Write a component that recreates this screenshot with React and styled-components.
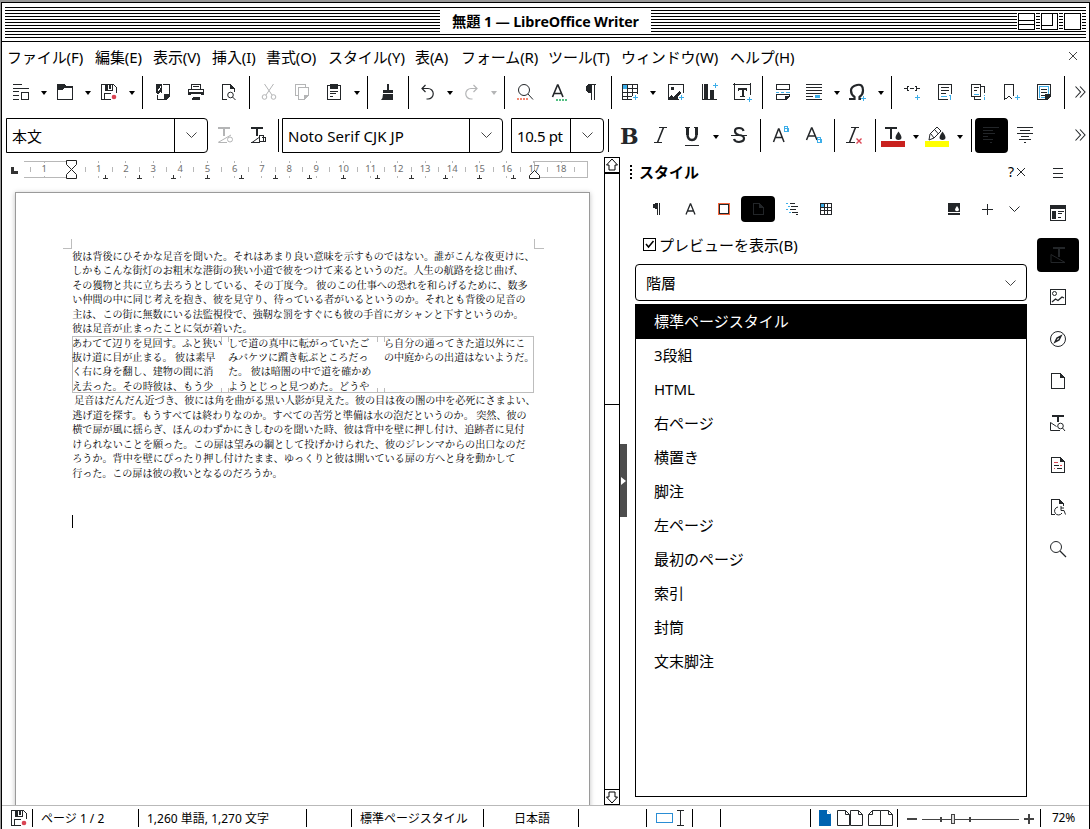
import React from 'react';
import styled, { createGlobalStyle, css } from 'styled-components';

const INK = '#232629';
const BLUE = '#3daee9';
const RED = '#da4453';
const MUTED = '#b4b5b6';

const GlobalStyle = createGlobalStyle`
  * { box-sizing: border-box; }
  body {
    margin: 0;
    background: #999;
    color: #000;
    font-family: "Noto Sans", "Noto Sans CJK JP", sans-serif;
    font-size: 15px;
    overflow: hidden;
  }
`;

const Window = styled.div`
  display: flex;
  flex-direction: column;
  width: 1089px;
  height: 827px;
  margin: 2px 0 0 1px;
  border: 1px solid #000;
  border-bottom: 0;
  background: #fff;
  overflow: hidden;
`;

/* Title bar */
const TitleBar = styled.header`
  flex: none;
  height: 39px;
  padding: 4px 3px 3px;
  border-bottom: 1px solid #000;
`;
const Stripes = styled.div`
  display: grid;
  grid-template-columns: 1fr 211px 1fr;
  height: 31px;
  background: repeating-linear-gradient(#000 0 1px, #fff 1px 3px);
`;
const Title = styled.h1`
  grid-column: 2;
  height: 26px;
  margin: 1px 0 0;
  background: #fff;
  font-family: "Open Sans", "Noto Sans CJK JP", sans-serif;
  font-size: 14.3px;
  font-weight: 700;
  line-height: 27px;
  text-align: center;
  white-space: nowrap;
  letter-spacing: -0.16px;
`;
const WindowButtons = styled.div`
  display: flex;
  justify-content: flex-end;
  gap: 4px;
  padding: 5px 4px 0 0;
`;
const WindowButton = styled.button`
  position: relative;
  width: 19px;
  height: 19px;
  padding: 0;
  border: 1px solid #fff;
  background: #fff;
  box-shadow: inset 0 0 0 1px #000;
  ${p => p.$kind === 'shade' && css`
    &::after { content: ''; position: absolute; left: 0; right: 0; top: 7px; height: 3px; border: solid #000; border-width: 1px 0; }
  `}
  ${p => p.$kind === 'zoom' && css`
    &::after { content: ''; position: absolute; left: 0; top: 0; width: 10px; height: 11px; border: 1px solid #000; }
  `}
`;

/* Menus */
const MenuBar = styled.nav`
  display: flex;
  flex: none;
  align-items: center;
  height: 32px;
  padding: 0 7px 4px 5px;
`;
const MenuItem = styled.span`
  flex: none;
  width: ${p => p.$w}px;
  white-space: nowrap;
  letter-spacing: -0.1px;
`;
const MenuEnd = styled.div`
  display: flex;
  flex: 1;
  justify-content: flex-end;
  padding-right: 1px;
`;

/* Toolbars */
const Toolbar = styled.div`
  display: flex;
  flex: none;
  align-items: center;
  height: 36px;
  padding-left: 3px;
`;
const FormatBar = styled(Toolbar)`
  height: 47px;
  padding: 8px 0 4px 4px;
  svg { margin-bottom: 1px; }
`;
const Slot = styled.span`
  display: flex;
  flex: none;
  align-items: center;
  align-self: stretch;
  width: ${p => p.$w}px;
  padding-left: ${p => Math.floor((p.$w - 16) / 2)}px;
  border-radius: 4px;
  background: ${p => (p.$on ? '#000' : 'none')};
`;
const Divider = styled.i`
  flex: none;
  width: 1px;
  height: 33px;
  margin: ${p => p.$top ?? 0}px ${p => p.$w - 1 - Math.floor(p.$w / 2)}px 0 ${p => Math.floor(p.$w / 2)}px;
  background: #000;
`;
const Arrow = styled.span`
  flex: none;
  display: flex;
  justify-content: center;
  width: ${p => p.$w}px;
  padding: 2px 0 0 1px;
  &::after {
    content: '';
    border: solid transparent;
    border-width: 4px 3.5px 0;
    border-top-color: ${p => (p.$off ? MUTED : '#000')};
  }
`;
const Combo = styled.div`
  display: flex;
  flex: none;
  width: ${p => p.$w}px;
  height: 35px;
  margin-right: ${p => p.$mr}px;
  border: 1px solid #000;
  border-radius: 0 4px 4px 0;
`;
const ComboValue = styled.span`
  flex: 1;
  padding-left: 5px;
  line-height: 35px;
  white-space: nowrap;
  letter-spacing: ${p => p.$ls ?? 0}px;
`;
const ComboButton = styled.span`
  display: flex;
  align-items: center;
  justify-content: center;
  width: 33px;
  border-left: 1px solid #000;
`;

/* Main area */
const Main = styled.main`
  display: flex;
  flex: none;
  height: 648px;
`;
const DocArea = styled.section`
  width: 602px;
  overflow: hidden;
`;
const RulerSvg = styled.svg`
  display: block;
  width: 602px;
  height: 35px;
  font-size: 9.5px;
  fill: #707070;
`;
const Page = styled.article`
  position: relative;
  width: 575px;
  height: 700px;
  margin-left: 13px;
  padding: 55.8px 0 0 56.3px;
  border: 1px solid #9a9a9a;
  box-shadow: 0 1px 5px rgba(0, 0, 0, 0.25);
  font-family: "Noto Serif CJK JP", "Noto Sans CJK JP", serif;
  font-size: 10.1px;
  line-height: 14.46px;
  color: #000;
`;
const Line = styled.div`
  width: ${p => p.$w}px;
  height: 14.46px;
  margin-left: ${p => p.$indent ?? 0}px;
  white-space: nowrap;
  letter-spacing: -0.35px;
  text-align: justify;
  text-align-last: justify;
`;
const Columns = styled.div`
  position: relative;
  display: grid;
  grid-template-columns: 156px 156px 150px;
  width: 462px;
  height: 57.84px;
  margin-left: -0.3px;
  box-shadow: inset 0 0 0 1px #bdbdbd;
`;
const Overlay = styled.svg`
  position: absolute;
  left: 0;
  top: 0;
  width: ${p => p.$w}px;
  height: ${p => p.$h}px;
  stroke: #bdbdbd;
  fill: none;
`;
const Caret = styled.div`
  width: 1px;
  height: 13px;
  margin: 35px 0 0 -0.3px;
  background: #000;
`;

/* Scroll bar */
const ScrollBar = styled.div`
  display: flex;
  flex-direction: column;
  width: 16px;
  border: 1px solid #000;
`;
const ScrollEnd = styled.div`
  display: flex;
  justify-content: center;
  flex: none;
  height: 14px;
`;
const Thumb = styled.div`
  height: 233px;
  border: solid #000;
  border-width: 2px 0 1px;
`;
const Trough = styled.div`
  flex: 1;
  border-bottom: 1px solid #000;
`;
const Splitter = styled.div`
  display: flex;
  align-items: center;
  width: 7px;
  height: 73px;
  margin-top: 287px;
  background: #4d4d4d;
  &::after {
    content: '';
    margin-left: 1px;
    border: solid transparent;
    border-width: 4px 0 4px 5px;
    border-left-color: #fff;
  }
`;

/* Sidebar */
const Deck = styled.aside`
  display: flex;
  flex-direction: column;
  width: 400px;
`;
const DeckTitle = styled.div`
  display: flex;
  align-items: center;
  height: 31px;
  padding: 0 0 2px 3px;
`;
const Grip = styled.i`
  width: 2px;
  height: 14px;
  margin-right: 7px;
  background: repeating-linear-gradient(#000 0 2px, transparent 2px 4px);
`;
const DeckName = styled.b`
  flex: 1;
`;
const HelpMark = styled.span`
  margin-right: -1px;
  font-size: 14px;
`;
const DeckHead = styled.div`
  width: 402px;
`;
const DeckTools = styled.div`
  display: flex;
  height: 26px;
  margin: 8px 0 0 14px;
`;
const CheckRow = styled.label`
  display: flex;
  align-items: center;
  height: 22px;
  margin: 11px 0 1px 16px;
`;
const CheckBox = styled.span`
  display: flex;
  width: 13px;
  height: 13px;
  margin: 1px 3px 0 0;
  border: 1px solid #000;
`;
const Select = styled.div`
  display: flex;
  align-items: center;
  justify-content: space-between;
  width: 392px;
  height: 37px;
  margin: 8px 0 0 8px;
  padding: 0 8px 0 10px;
  border: 1px solid #000;
  border-radius: 4px;
`;
const StyleList = styled.ul`
  width: 392px;
  height: 493px;
  margin: 3px 0 0 8px;
  padding: 0;
  border: 1px solid #000;
  border-top: 0;
  list-style: none;
`;
const StyleItem = styled.li`
  height: ${p => (p.$on ? 35 : 34)}px;
  margin: 0 -1px;
  padding-left: 19px;
  line-height: ${p => (p.$on ? 34 : 32)}px;
  background: ${p => (p.$on ? '#000' : 'none')};
  color: ${p => (p.$on ? '#fff' : '#000')};
`;
const TabBar = styled.div`
  display: flex;
  flex-direction: column;
  gap: 8px;
  padding: 0 0 0 10px;
`;
const Tab = styled.span`
  display: flex;
  align-items: center;
  justify-content: center;
  width: 42px;
  height: 34px;
  border-radius: 4px;
  background: ${p => (p.$on ? '#000' : 'none')};
`;
const MenuTab = styled(Tab)`
  height: 31px;
`;

/* Status bar */
const StatusBar = styled.footer`
  display: flex;
  align-items: center;
  flex: none;
  height: 24px;
  border-top: 1px solid #b9b9b9;
  font-size: 12px;
`;
const StatusCell = styled.span`
  display: flex;
  align-items: center;
  flex: none;
  gap: ${p => p.$gap ?? 0}px;
  width: ${p => p.$w}px;
  height: 18px;
  padding-left: ${p => p.$pl ?? 8}px;
  padding-bottom: 1px;
  margin-top: 1px;
  border-right: ${p => (p.$last ? 0 : 1)}px solid #000;
  white-space: nowrap;
  letter-spacing: ${p => p.$ls ?? 0}px;
`;

const IconSvg = styled.svg`
  display: block;
  flex: none;
  overflow: visible;
  stroke: ${p => p.$c};
  fill: none;
`;

const Plus = ({ x, y }) => <path stroke={BLUE} d={`M${x} ${y}h5M${x + 2.5} ${y - 2.5}v5`} />;
const Fill = p => <path fill={INK} stroke="none" {...p} />;
const Lines = ({ d, c = INK }) => <path d={d} stroke={c} />;

const ICONS = {
  template: <path d="M0 .5h9M0 4.5h16M0 7.5h6M0 11.5h6M0 15.5h6M8.5 8.5h7v7h-7z" />,
  open: <><Fill d="M0 0h7l2 2h7v2H7L5 6H0z" /><path d="M.5 1v14.5h15V3" /></>,
  save: <><path d="M.5 15.5V.5h12l3 3V9M3.5 15.5V9.5h6.5M.5 15.5h9" /><path d="M4.5 1v5.5h7V1" /><Fill d="M5 1h2v5H5zM8 1h2v4H8z" /><circle shapeRendering="auto" cx="13" cy="13" r="2.3" fill={RED} stroke="none" /></>,
  pdf: <><path d="M8 .5h6.500v10M2.500 11v4.500h6" /><Fill d="M1 0h6v9l-2-1-2 2-2-1zM15 10v2l-4 4H9v-6z" /><path stroke="#fff" d="M3 6.500q2-1.500 2.500-4" /></>,
  print: <><path d="M3.500 5V.5h9V5M5 2.500h6M1 10.500H.5v-5h15v5H14" /><Fill d="M3 10h10v1h2V8H1v3h2zM5 13h7v3H4v-2z" /></>,
  preview: <><path d="M6 15.500H1.500V.5h8l4 4V8" /><Fill d="M9 0l5 5H9z" /><circle shapeRendering="auto" cx="9.500" cy="11" r="2.800" /><path shapeRendering="auto" d="M11.500 13l3 3" /></>,
  cut: <g shapeRendering="auto"><path d="M3.500 0l7.500 11M12.500 0L5 11" /><circle cx="3.500" cy="13" r="2.300" /><circle cx="12.500" cy="13" r="2.300" /></g>,
  copy: <><path d="M4 11.500H1.500V.5h10V3" /><path d="M4.500 3.500h10v8l-4 4h-6z" /><Fill style={{ fill: MUTED }} d="M15 11l-5 5v-5z" /></>,
  paste: <><path d="M4 1.500H1.500v14h13v-14H12M4 7.500h8M4 9.500h6M4 12.500h3" /><Fill d="M4 0h8v5H4z" /></>,
  brush: <Fill shapeRendering="auto" d="M7 0h2v6h4v3H3V6h4zM3 10h10v6H1q2-2 2-6z" />,
  undo: <g shapeRendering="auto"><path strokeWidth="1.200" d="M5.500 1L2 4.500 5.500 8M2.500 4.500h5.500a5 5 0 0 1 0 10.500H6.500" /></g>,
  redo: <g shapeRendering="auto"><path strokeWidth="1.200" d="M10.500 1L14 4.500 10.500 8M13.500 4.500H8A5 5 0 0 0 8 15h1.500" /></g>,
  find: <><g shapeRendering="auto"><circle cx="7" cy="6" r="5.500" /><path d="M11 10l5 5.500" /></g><path stroke="#f48771" strokeWidth="2" strokeDasharray="2 1" d="M0 15h11" /></>,
  spell: <><path shapeRendering="auto" strokeWidth="1.600" d="M1.500 13L6.500 1h.5l5 12M3.500 9.500h6.500" /><path stroke="#54c083" strokeWidth="2" strokeDasharray="2 1" d="M5 16h11" /></>,
  para: <><Fill d="M9 0v9H7Q3 8.500 3 4.500T7 0z" /><path d="M8.500 0v16M11.500 0v16M7 .5h6" /></>,
  table: <><path d="M10 15.500H.5V.5h15V10M1 4.500h15M1 8.500h15M1 12.500h9M5.500 1v15M10.500 1v11" /><path fill={BLUE} stroke="none" d="M1 1h4v4H1z" /><Plus x={11} y={13.500} /></>,
  image: <><path d="M.5 16V.5h15V9" /><Fill d="M0 16l3-5 3 2 5-6 2 2-3 4 1 3z" /><circle cx="4.500" cy="4.500" r="1.800" fill={INK} stroke="none" /><Plus x={11} y={13.500} /></>,
  chart: <><path d="M1.500 0v15.500H16" /><Fill d="M3 0h4v15H3zM9 6h4v9H9z" /><Plus x={12} y={1.500} /></>,
  textbox: <><path d="M.5-1v16.500H11M-1 .5h18M16.500-1v12" /><path strokeWidth="2" d="M4 5h9M8.500 5v8" /><path d="M4.500 4v3M12.500 4v3M6 12.500h5" /><Plus x={13} y={15} /></>,
  pagebreak: <><path d="M1.500.500h13v5h-13zM10 15.500H1.500v-5h13v2" /><Fill d="M15 12l-4 4h-1v-4z" /><Lines c={BLUE} d="M1 8h3M6 8h3M11 8h4" /></>,
  field: <><path d="M0 .5h16M0 3.500h16M0 6.500h16M0 9.500h16M0 12.500h7M0 15.500h16" /><path fill={BLUE} stroke="none" d="M9 11h5v3H9z" /></>,
  omega: <><path shapeRendering="auto" strokeWidth="2.200" d="M0 15h5.500v-2Q2 10.500 2 6.500T8 1t6 5.500q0 4-3.500 6.500v2H12" /><Plus x={12} y={14.500} /></>,
  link: <><path d="M0 4.500h3M5 2.500H3.500v4H5M6 4.500h4M11 2.500h1.500v4H11M13 4.500h3" /><Plus x={11} y={13.500} /></>,
  footnote: <><path d="M11 15.500H1.500V.5h13V10M4 3.500h8M4 6.500h8M4 9.500h5" /><Lines c={BLUE} d="M4 12.500h6M12 11.500h1.500v4" /></>,
  endnote: <><path d="M1.500.500h9v12h-9zM11 2.500h3.500V9M4.500 13v2.500H11M4 3.500h5M4 6.500h3" /><Lines c={BLUE} d="M4 10.500h5M14.500 11v1M14.500 13v3" /></>,
  bookmark: <><path d="M10.500 12V.5h-9v15l4.500-3 3 2" /><Plus x={12} y={13.500} /></>,
  crossref: <><path d="M10 15.500H1.500V.5h13V12" /><Lines c={BLUE} d="M4 13.500h-1V2.500h9V10M5 13.500h4" /><path d="M5 5.500h6M5 8.500h6M5 11.500h4" /><Fill d="M15 10v2l-4 4H9v-6z" /></>,
  more: <g shapeRendering="auto"><path strokeWidth="1.100" d="M3.500 2.500L8.500 8l-5 5.500M8 2.500L13 8l-5 5.500" /></g>,
  updateStyle: <><path strokeWidth="2" d="M1 1h12M7 1v8" /><path shapeRendering="auto" d="M2 15.500h8M1 15.500L14 8" /><circle shapeRendering="auto" cx="13" cy="12.500" r="2.500" /></>,
  newStyle: <><path strokeWidth="2" d="M1 1h12M7 1v8" /><path shapeRendering="auto" d="M1 15.500h9M2 15.500l7-5" /><path d="M9.500 8.500h4v6h-4zM12 10.500h3.500v4H14" /></>,
  italic: <><path d="M6 .5h8M1 15.500h8" /><path shapeRendering="auto" strokeWidth="1.600" d="M10.500.5l-6 15" /></>,
  underline: <><path strokeWidth="3" d="M3.500 0v8M12.500 0v8" /><path shapeRendering="auto" strokeWidth="2.400" d="M3.500 7q0 6 4.500 6t4.500-6" /><path d="M1 0.500h5M10 0.500h4M1 18.500h14" /></>,
  strike: <><path shapeRendering="auto" strokeWidth="2.200" d="M12.500 4Q12 1 8 1 4 1 4 4t4 4q5 .5 5 3.500T8 15Q4 15 3 12" /><path d="M0 8.500h16" /></>,
  sup: <><path shapeRendering="auto" strokeWidth="1.500" d="M.5 15L5.500 2h.5l5 13M2.500 10.500h7" /><Lines c={BLUE} d="M11.500-.5h3v5h-3zM11.500 1.500h3.500v3" /></>,
  sub: <><path shapeRendering="auto" strokeWidth="1.500" d="M.5 13L5.500 1h.5l5 12M2.500 9h7" /><Lines c={BLUE} d="M11.500 10.500h3v5h-3zM11.500 12.500h3.500v3" /></>,
  clear: <><path d="M5 .5h8M0 15.500h9" /><path shapeRendering="auto" strokeWidth="1.600" d="M9.500.5l-6 15" /><path shapeRendering="auto" stroke={RED} strokeWidth="1.400" d="M10.500 11.500l5 5M15.500 11.500l-5 5" /></>,
  fontColor: <><path strokeWidth="2" d="M0 1h12M6 1v11" /><Fill shapeRendering="auto" d="M13.500 4.500q-6 8 0 8.500 6-.5 0-8.500" /><path fill="#c9211e" stroke="none" d="M-4 14h24v6H-4z" /></>,
  highlight: <><path shapeRendering="auto" d="M0 13l1-6 7-7 4 4-7 7-5 2M2 7l3 4M6 3l3.500 4" /><Fill shapeRendering="auto" d="M13.500 4.500q-6 8 0 8.500 6-.5 0-8.500" /><path fill="#ff0" stroke="none" d="M-4 14h24v6H-4z" /></>,
  alignLeft: <path d="M0 .5h16M0 3.500h10M0 6.500h12M0 9.500h5M0 12.500h10M7 15.500h2" />,
  alignCenter: <path d="M0 .5h16M3 3.500h10M0 6.500h16M4 9.500h8M2 12.500h12M7 15.500h2" />,
  chevron: <path shapeRendering="auto" d="M3.500 5.500l5 5 5-5" />,
  frame: <><path stroke="#f4673e" d="M2.500 2.500h11v11h-11z" /><path d="M3.500 3.500h9v9h-9z" /></>,
  page: <><path d="M3.500 2.500h6l4 4v7h-10z" /><Fill d="M9 2l5 5H9z" /></>,
  list: <><path d="M6 2.500h5M7 5.500h7M6 8.500h6M8 11.500h6M12 13.500h2" /><Lines c={BLUE} d="M2 2.500h2M4 5.500h2M2 8.500h2M5 11.500h2" /></>,
  smallTable: <><path d="M2.500 2.500h11v11h-11zM2 6.500h12M2 9.500h12M6.500 2v12M9.500 2v12" /><path fill={BLUE} stroke="none" d="M3 3h3v3H3z" /></>,
  smallPara: <><Fill d="M9 2v6H7Q4 7.500 4 5t3-3z" /><path d="M8.500 2v12M10.500 2v12" /></>,
  smallA: <path shapeRendering="auto" strokeWidth="1.300" d="M3 13.500L7.300 3h.4L12 13.500M4.500 10h6" />,
  fillMode: <><Fill d="M2 2h12v9H2zM2 12h12v2H2z" /><path shapeRendering="auto" fill="#fff" stroke="none" d="M11 5q-4 5 0 5.300 4-.3 0-5.300" /></>,
  add: <path d="M3 8.500h11M8.500 3v11" />,
  menu: <path d="M3 3.500h10M3 8.500h10M3 12.500h10" />,
  props: <><path d="M.5.500h15v15H.5zM8 6.500h6M8 8.500h4M8 12.500h3" /><Fill d="M0 0h16v4H0zM2 6h4v8H2z" /></>,
  tabStyles: <><path strokeWidth="2" d="M3 1h12M9 1v9" /><path shapeRendering="auto" d="M1 7.500v8h14z" /></>,
  gallery: <><path d="M.5.500h15v15H.5z" /><circle shapeRendering="auto" cx="4.500" cy="4.500" r="2" /><path shapeRendering="auto" strokeWidth="1.300" d="M2 13l3.500-3 2.500 1.500L12 8l2 1" /></>,
  compass: <g shapeRendering="auto"><circle cx="8" cy="8" r="7.500" /><path strokeWidth="1.500" d="M11 5L9 9l-4 2 2-4z" /></g>,
  tabPage: <><path d="M1.500.500h9l4 4v11h-13z" /><Fill d="M10 0l5 5h-5z" /></>,
  inspector: <><path strokeWidth="2" d="M2 1h12M8 1v6" /><path shapeRendering="auto" d="M10 15.500H.5v-8l6 4" /><circle shapeRendering="auto" cx="10.500" cy="11" r="2.800" /><path shapeRendering="auto" d="M12.500 13l2.500 3" /></>,
  changes: <><path d="M1.500.500h9l4 4v11h-13zM4 8.500h5M7 11.500h5" /><Fill d="M10 0l5 5h-5z" /><Lines c={RED} d="M4 5.500h4M10 8.500h2M4 11.500h1" /></>,
  access: <><path d="M5 15.500H1.500V.5h8l4 4V7" /><Fill d="M9 0l5 5H9z" /><g shapeRendering="auto"><path d="M8 8a4 4 0 1 0 4 6M11 7v4.500h3l1.500 4M11 9h3" /></g></>,
  search: <g shapeRendering="auto"><circle cx="6" cy="6" r="5.500" /><path strokeWidth="1.300" d="M10 10l6 6" /></g>,
  close: <path shapeRendering="auto" d="M4 4l8 8M12 4l-8 8" />,
};

const Icon = ({ n, c = INK }) => (
  <IconSvg width="16" height="16" viewBox="0 0 16 16" shapeRendering="crispEdges" $c={c} aria-hidden="true">{ICONS[n]}</IconSvg>
);

const BoldGlyph = styled.span`
  width: 16px;
  font-family: "DejaVu Serif", serif;
  font-size: 22px;
  font-weight: 700;
  line-height: 30px;
  color: ${INK};
`;

const MENUS = [['ファイル(F)', 88], ['編集(E)', 58], ['表示(V)', 59], ['挿入(I)', 54], ['書式(O)', 62], ['スタイル(Y)', 87], ['表(A)', 46], ['フォーム(R)', 87], ['ツール(T)', 73], ['ウィンドウ(W)', 109], ['ヘルプ(H)', 70]];

/* [kind or icon name, width, disabled] */
const STANDARD = [
  ['template', 32], ['>', 12], ['open', 32], ['>', 12], ['save', 32], ['>', 12], ['|', 10],
  ['pdf', 33], ['print', 33], ['preview', 33], ['|', 7],
  ['cut', 33, 1], ['copy', 33, 1], ['paste', 31], ['>', 12], ['|', 10],
  ['brush', 32], ['|', 9], ['undo', 30], ['>', 12], ['redo', 32, 1], ['>', 13, 1], ['|', 9],
  ['find', 33], ['spell', 34], ['para', 31], ['|', 8],
  ['table', 31], ['>', 13], ['image', 34], ['chart', 33], ['textbox', 32], ['|', 9],
  ['pagebreak', 32], ['field', 31], ['>', 12], ['omega', 31], ['>', 14], ['|', 9],
  ['link', 33], ['footnote', 33], ['endnote', 33], ['bookmark', 33], ['crossref', 32], ['|', 9], ['more', 22],
];
const FORMAT = [
  ['|', 8], ['bold', 33], ['italic', 32], ['underline', 30], ['>', 16], ['strike', 32], ['|', 10],
  ['sup', 33], ['sub', 33], ['|', 7], ['clear', 33], ['|', 8],
  ['fontColor', 28], ['>', 16], ['highlight', 28], ['>', 16], ['|', 8],
];

const Tools = ({ items, top }) => items.map(([n, w, off], i) => {
  if (n === '|') return <Divider key={i} $w={w} $top={top} />;
  if (n === '>') return <Arrow key={i} $w={w} $off={off} />;
  return <Slot key={i} $w={w}>{n === 'bold' ? <BoldGlyph>B</BoldGlyph> : <Icon n={n} c={off ? MUTED : INK} />}</Slot>;
});

const Ruler = () => {
  const at = n => 69.5 + n * 27.2;
  const labels = [-1, ...Array.from({ length: 18 }, (_, i) => i + 1)];
  return (
    <RulerSvg shapeRendering="crispEdges">
      <path d="M10.500 10v5h5.500" stroke="#333" strokeWidth="3" fill="none" />
      <path d="M22 4.500h43M22 20.500h43M532.500 4.500h53v16h-53z" stroke="#b8b8b8" fill="none" />
      {labels.map(n => (
        <g key={n}>
          <path d={`M${at(n)} 4v2M${at(n)} 19v2M${at(n - 0.5)} 9.500v5`} stroke="#b8b8b8" />
          <text x={at(n)} y="15" textAnchor="middle">{Math.abs(n)}</text>
        </g>
      ))}
      <path d={`M${at(0.5)} 9.500v5M${at(18.5)} 9.500v5`} stroke="#b8b8b8" />
      {Array.from({ length: 13 }, (_, i) => (
        <path key={i} d={`M${101 + i * 34} 21.500h5M${103.500 + i * 34} 18v3`} stroke="#333" />
      ))}
      <path d="M64.500 3.500h10v4l-5 5-5-5zM64.500 21.500h10v-4l-5-5-5 5zM527.500 21.500h10v-3l-5-5-5 5z" stroke="#222" fill="#fff" shapeRendering="auto" />
    </RulerSvg>
  );
};

const INTRO = [
  ['彼は背後にひそかな足音を聞いた。それはあまり良い意味を示すものではない。誰がこんな夜更けに、', 462],
  ['しかもこんな街灯のお粗末な港街の狭い小道で彼をつけて来るというのだ。人生の航路を捻じ曲げ、', 451],
  ['その獲物と共に立ち去ろうとしている、その丁度今。 彼のこの仕事への恐れを和らげるために、数多', 455],
  ['い仲間の中に同じ考えを抱き、彼を見守り、待っている者がいるというのか。それとも背後の足音の', 453],
  ['主は、この街に無数にいる法監視役で、強靭な罰をすぐにも彼の手首にガシャンと下すというのか。', 451],
  ['彼は足音が止まったことに気が着いた。', 180],
];
const COLUMNS = [
  [['あわてて辺りを見回す。ふと狭い', 150], ['抜け道に目が止まる。 彼は素早', 143], ['く右に身を翻し、建物の間に消', 141], ['え去った。その時彼は、もう少', 141]],
  [['しで道の真中に転がっていたご', 141], ['みバケツに躓き転ぶところだっ', 140], ['た。 彼は暗闇の中で道を確かめ', 143], ['ようとじっと見つめた。どうや', 141]],
  [['ら自分の通ってきた道以外にこ', 141], ['の中庭からの出道はないようだ。', 150]],
];
const OUTRO = [
  ['足音はだんだん近づき、彼には角を曲がる黒い人影が見えた。彼の目は夜の闇の中を必死にさまよい、', 461, 2],
  ['逃げ道を探す。もうすべては終わりなのか。すべての苦労と準備は水の泡だというのか。 突然、彼の', 454],
  ['横で扉が風に揺らぎ、ほんのわずかにきしむのを聞いた時、彼は背中を壁に押し付け、追跡者に見付', 452],
  ['けられないことを願った。この扉は望みの綱として投げかけられた、彼のジレンマからの出口なのだ', 453],
  ['ろうか。背中を壁にぴったり押し付けたまま、ゆっくりと彼は開いている扉の方へと身を動かして', 443],
  ['行った。この扉は彼の救いとなるのだろうか。', 210],
];
const Text = ({ lines }) => lines.map(([t, w, indent]) => <Line key={t} $w={w} $indent={indent}>{t}</Line>);

const STYLES = ['標準ページスタイル', '3段組', 'HTML', '右ページ', '横置き', '脚注', '左ページ', '最初のページ', '索引', '封筒', '文末脚注'];
const TABS = ['props', 'tabStyles', 'gallery', 'compass', 'tabPage', 'inspector', 'changes', 'access', 'search'];

const PageShape = ({ x }) => <path d={`M${x}.5h8l4 4v11h-12zM${x + 8}.5v4h4`} fill="#fff" />;

export default function App() {
  return (
    <>
      <GlobalStyle />
      <Window>
        <TitleBar>
          <Stripes>
            <Title>無題 1 — LibreOffice Writer</Title>
            <WindowButtons>
              <WindowButton $kind="shade" />
              <WindowButton $kind="zoom" />
              <WindowButton />
            </WindowButtons>
          </Stripes>
        </TitleBar>
        <MenuBar>
          {MENUS.map(([t, w]) => <MenuItem key={t} $w={w}>{t}</MenuItem>)}
          <MenuEnd><Icon n="close" c="#444" /></MenuEnd>
        </MenuBar>
        <Toolbar><Tools items={STANDARD} top={1} /></Toolbar>
        <FormatBar>
          <Combo $w={202} $mr={1}><ComboValue>本文</ComboValue><ComboButton><Icon n="chevron" c="#444" /></ComboButton></Combo>
          <Slot $w={33}><Icon n="updateStyle" c={MUTED} /></Slot>
          <Slot $w={33}><Icon n="newStyle" /></Slot>
          <Divider $w={7} />
          <Combo $w={221} $mr={8}><ComboValue $ls={0.07}>Noto Serif CJK JP</ComboValue><ComboButton><Icon n="chevron" c="#444" /></ComboButton></Combo>
          <Combo $w={93} $mr={0}><ComboValue $ls={-0.4}>10.5 pt</ComboValue><ComboButton><Icon n="chevron" c="#444" /></ComboButton></Combo>
          <Tools items={FORMAT} />
          <Slot $w={33} $on><Icon n="alignLeft" /></Slot>
          <Slot $w={34}><Icon n="alignCenter" /></Slot>
          <Slot $w={28} />
          <Slot $w={20}><Icon n="more" /></Slot>
        </FormatBar>
        <Main>
          <DocArea>
            <Ruler />
            <Page>
              <Overlay $w={573} $h={80} shapeRendering="crispEdges">
                <path d="M47 55.500h8.500V46M518.500 46v9.500h9" />
              </Overlay>
              <Text lines={INTRO} />
              <Columns>
                {COLUMNS.map((c, i) => <div key={i}><Text lines={c} /></div>)}
                <Overlay $w={462} $h={57} shapeRendering="crispEdges">
                  <path d="M149.500 1v5M156.500 1v5M149.500 52v5M156.500 52v5M305.500 1v5M312.500 1v5M305.500 52v5M312.500 52v5" />
                </Overlay>
              </Columns>
              <Text lines={OUTRO} />
              <Caret />
            </Page>
          </DocArea>
          <ScrollBar>
            <ScrollEnd><IconSvg width="14" height="14" $c="#000"><path d="M7 1l5.500 6H10v5H4V7H1.500z" /></IconSvg></ScrollEnd>
            <Thumb />
            <Trough />
            <ScrollEnd><IconSvg width="14" height="14" $c="#000"><path d="M7 13l5.500-6H10V2H4v5H1.500z" /></IconSvg></ScrollEnd>
          </ScrollBar>
          <Splitter />
          <Deck>
            <DeckHead>
              <DeckTitle>
                <Grip />
                <DeckName>スタイル</DeckName>
                <HelpMark>?</HelpMark>
                <Icon n="close" />
              </DeckTitle>
            </DeckHead>
            <DeckTools>
              <Slot $w={33}><Icon n="smallPara" /></Slot>
              <Slot $w={34}><Icon n="smallA" /></Slot>
              <Slot $w={33}><Icon n="frame" /></Slot>
              <Slot $w={34} $on><Icon n="page" /></Slot>
              <Slot $w={34}><Icon n="list" /></Slot>
              <Slot $w={34}><Icon n="smallTable" /></Slot>
              <Slot $w={94} />
              <Slot $w={34}><Icon n="fillMode" /></Slot>
              <Slot $w={32}><Icon n="add" /></Slot>
              <Slot $w={22}><Icon n="chevron" /></Slot>
            </DeckTools>
            <CheckRow>
              <CheckBox><IconSvg width="11" height="11" $c="#000"><path strokeWidth="1.500" d="M2 5l2.500 3L9.500 2" /></IconSvg></CheckBox>
              プレビューを表示(B)
            </CheckRow>
            <Select>階層<Icon n="chevron" c="#444" /></Select>
            <StyleList>
              {STYLES.map((s, i) => <StyleItem key={s} $on={i === 0}>{s}</StyleItem>)}
            </StyleList>
          </Deck>
          <TabBar>
            <MenuTab><Icon n="menu" /></MenuTab>
            {TABS.map(t => <Tab key={t} $on={t === 'tabStyles'}><Icon n={t} /></Tab>)}
          </TabBar>
        </Main>
        <StatusBar>
          <StatusCell $w={31} $pl={9}><Icon n="save" /></StatusCell>
          <StatusCell $w={106}>ページ 1 / 2</StatusCell>
          <StatusCell $w={168}>1,260 単語, 1,270 文字</StatusCell>
          <StatusCell $w={45} />
          <StatusCell $w={132}>標準ページスタイル</StatusCell>
          <StatusCell $w={95} $pl={30}>日本語</StatusCell>
          <StatusCell $w={68} />
          <StatusCell $w={46} $pl={9} $gap={4}>
            <IconSvg width="17" height="10" $c="#2a8dd4" shapeRendering="crispEdges"><path d="M.5.500h16v9H.5z" /></IconSvg>
            <IconSvg width="7" height="16" $c={INK} shapeRendering="crispEdges"><path d="M0 .5h7M0 15.500h7M3.500 0v16" /></IconSvg>
          </StatusCell>
          <StatusCell $w={28} />
          <StatusCell $w={90} />
          <StatusCell $w={87} $pl={8}>
            <IconSvg width="74" height="16" $c={INK}>
              <path d="M0 0h8l4 4v12H0z" fill="#0063b1" stroke="none" /><path d="M8 0v4h4z" fill="#fff" stroke="none" />
              <PageShape x={18.5} /><PageShape x={31.5} />
              <path d="M53.500.500l-4 4v11h12v-15zM53.500.5v4h-4" /><PageShape x={61.5} />
            </IconSvg>
          </StatusCell>
          <StatusCell $w={143} $pl={8}>
            <IconSvg width="130" height="16" $c="#444" shapeRendering="crispEdges">
              <path strokeWidth="2" d="M1 9h10M118 9h10M123 4v10" />
              <path d="M16 9.500h97" /><path strokeWidth="2" d="M35 7v5M64 7v5" />
              <path fill="#ddd" d="M45.500 4.500h3v9h-3z" />
            </IconSvg>
          </StatusCell>
          <StatusCell $w={48} $pl={11} $last $ls={-0.3}>72%</StatusCell>
        </StatusBar>
      </Window>
    </>
  );
}
